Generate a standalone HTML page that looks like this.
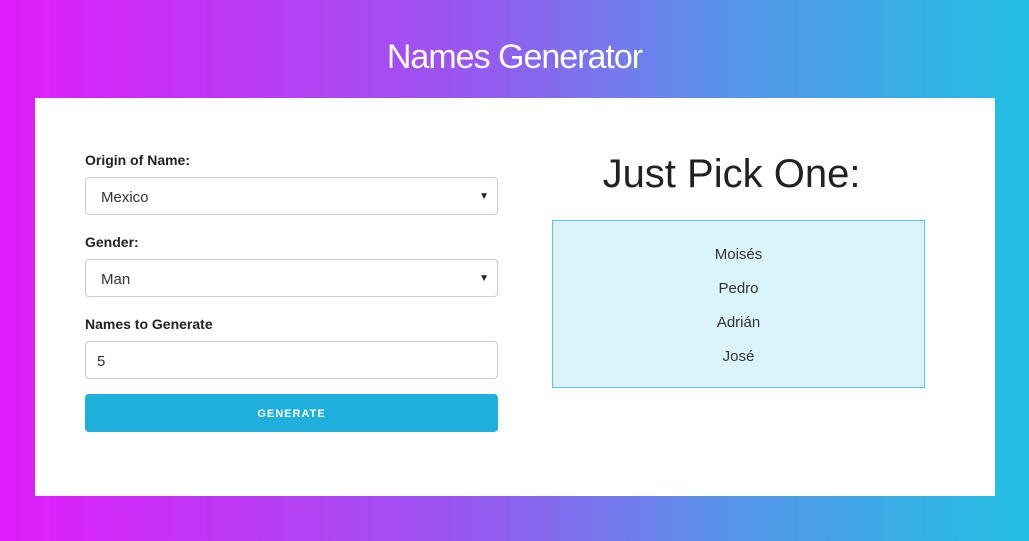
<!DOCTYPE html>
<html><head><meta charset="utf-8"><style>
*{box-sizing:border-box;margin:0;padding:0}
body{width:1029px;height:541px;overflow:hidden;font-family:"Liberation Sans",Arial,sans-serif;background:linear-gradient(90deg,#e11cfa 0%,#9a56f0 45%,#5a92ea 70%,#22c0e2 100%);position:relative}
h1{position:absolute;top:38px;left:0;width:1029px;text-align:center;color:#fff;font-weight:normal;font-size:34px;letter-spacing:-1px}
.card{position:absolute;left:35px;top:98px;width:960px;height:398px;background:#fff}
label{position:absolute;left:50px;font-weight:bold;font-size:14px;color:#222}
.f{position:absolute;left:50px;width:413px;height:38px;border:1px solid #ccc;border-radius:4px;font-size:15px;color:#333;padding:11px 0 0 15px}
.f .a{position:absolute;right:8px;top:13px;font-size:10px;color:#222}
.btn{position:absolute;left:50px;top:296px;width:413px;height:38px;background:#1fafdc;border-radius:4px;color:#fff;font-size:11px;font-weight:bold;letter-spacing:1px;text-align:center;line-height:40px}
h2{position:absolute;left:510px;width:373px;top:54px;text-align:center;font-weight:normal;font-size:40px;color:#222}
.box{position:absolute;left:517px;top:122px;width:373px;height:168px;background:#dbf4fc;border:1px solid #5bc6ec;text-align:center;font-size:15px;color:#333;padding-top:25px}
.box div{height:34px}
</style></head><body>
<h1>Names Generator</h1>
<div class="card">
<label style="top:54px">Origin of Name:</label>
<div class="f" style="top:79px">Mexico<span class="a">▼</span></div>
<label style="top:136px">Gender:</label>
<div class="f" style="top:161px">Man<span class="a">▼</span></div>
<label style="top:218px">Names to Generate</label>
<div class="f" style="top:243px;padding-left:11px">5</div>
<div class="btn">GENERATE</div>
<h2>Just Pick One:</h2>
<div class="box"><div>Moisés</div><div>Pedro</div><div>Adrián</div><div>José</div></div>
</div>
</body></html>
